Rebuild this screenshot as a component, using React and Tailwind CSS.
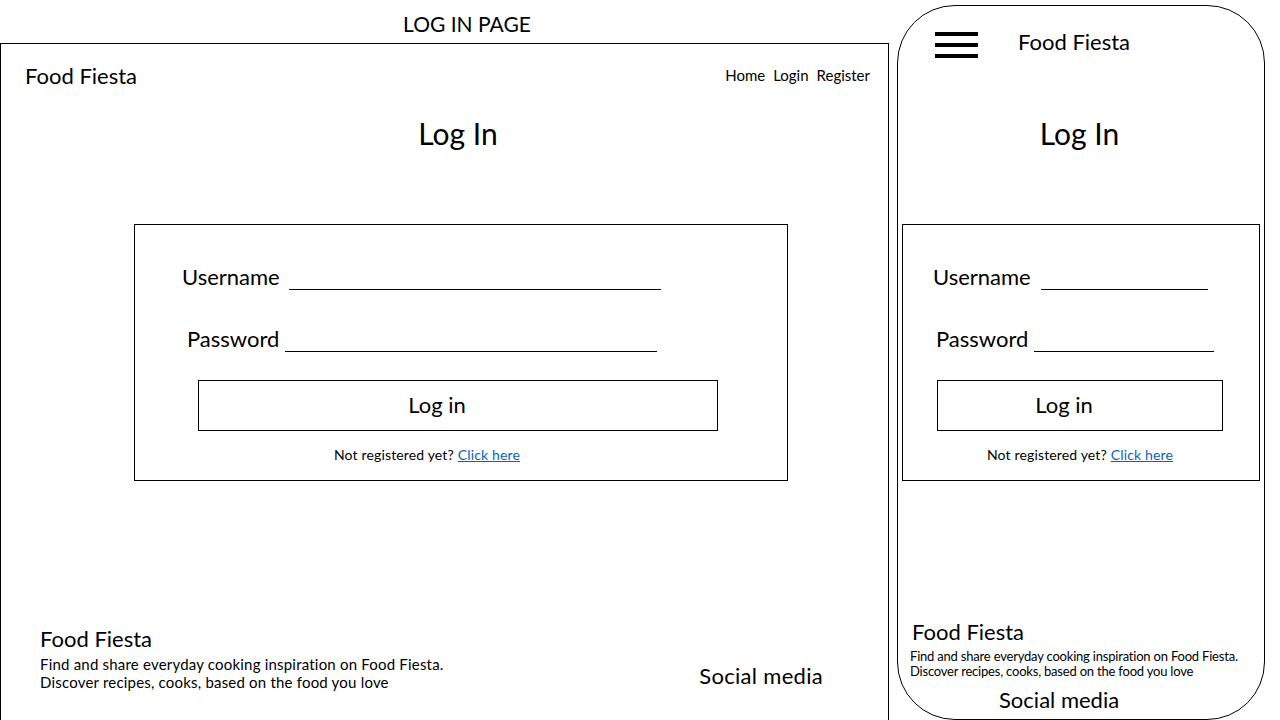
import React from 'react';

const font = { fontFamily: 'Lato, "Open Sans", sans-serif' };

const Field = ({ label, lineWidth, pl, gap }) => (
  <div className={`h-[30px] leading-[30px] text-[22px] whitespace-nowrap ${pl}`}>
    {label}
    <span className={`inline-block ${gap} ${lineWidth} border-b border-black -mb-[5px]`}></span>
  </div>
);

const LoginForm = ({ wrap, rows, button, notePl }) => (
  <div className={`border border-black h-[257px] pt-[37px] ${wrap}`}>
    <Field {...rows[0]} />
    <div className="h-[32px]"></div>
    <Field {...rows[1]} />
    <button className={`mt-[26px] h-[51px] border border-black text-[22px] flex items-center justify-center pb-[2px] ${button}`}>
      Log in
    </button>
    <p className={`mt-[14px] text-[14px] leading-[20px] tracking-[0.15px] whitespace-nowrap ${notePl}`}>
      Not registered yet? <a href="#" className="text-[#0563c1] underline">Click here</a>
    </p>
  </div>
);

const Desktop = () => (
  <div className="w-[889px] shrink-0">
    <div className="h-[43px] flex items-center justify-center pt-[5px] pl-[45px] text-[21px]">LOG IN PAGE</div>
    <div className="border border-black h-[700px] flex flex-col">
      <header className="h-[63px] flex items-center pl-[24px] pr-[18px]">
        <span className="text-[22px]">Food Fiesta</span>
        <nav className="ml-auto flex gap-[8px] text-[15px]">
          <a href="#">Home</a>
          <a href="#">Login</a>
          <a href="#">Register</a>
        </nav>
      </header>
      <h1 className="h-[54px] flex items-center justify-center pl-[27px] pb-[2px] text-[30px]">Log In</h1>
      <LoginForm
        wrap="mt-[63px] ml-[133px] w-[654px]"
        rows={[
          { label: 'Username', lineWidth: 'w-[372px]', pl: 'pl-[47px]', gap: 'ml-[9px]' },
          { label: 'Password', lineWidth: 'w-[372px]', pl: 'pl-[52px]', gap: 'ml-[6px]' },
        ]}
        button="ml-[63px] w-[520px] pr-[42px]"
        notePl="pl-[199px]"
      />
      <footer className="mt-[144px] flex pl-[39px]">
        <div>
          <div className="text-[22px] leading-[28px]">Food Fiesta</div>
          <p className="mt-[2px] text-[15px] leading-[18px] tracking-[0.2px]">
            Find and share everyday cooking inspiration on Food Fiesta.<br />
            Discover recipes, cooks, based on the food you love
          </p>
        </div>
        <div className="ml-auto mr-[65px] mt-[37px] text-[22px] leading-[28px] tracking-[0.3px]">Social media</div>
      </footer>
    </div>
  </div>
);

const Mobile = () => (
  <div className="mt-[5px] w-[368px] h-[715px] shrink-0 border border-black rounded-[58px] overflow-hidden flex flex-col">
    <header className="h-[70px] flex items-center">
      <div className="ml-[37px] mt-[8px] flex flex-col gap-[7px]">
        <span className="block w-[43px] h-[4px] bg-black"></span>
        <span className="block w-[43px] h-[4px] bg-black"></span>
        <span className="block w-[43px] h-[4px] bg-black"></span>
      </div>
      <span className="ml-[40px] text-[22px]">Food Fiesta</span>
    </header>
    <h1 className="mt-[31px] h-[54px] flex items-center justify-center pr-[3px] pb-[2px] text-[30px]">Log In</h1>
    <LoginForm
      wrap="mt-[63px] mx-[4px]"
      rows={[
        { label: 'Username', lineWidth: 'w-[167px]', pl: 'pl-[30px]', gap: 'ml-[10px]' },
        { label: 'Password', lineWidth: 'w-[180px]', pl: 'pl-[33px]', gap: 'ml-[6px]' },
      ]}
      button="ml-[34px] w-[286px] pr-[32px]"
      notePl="pl-[84px]"
    />
    <footer className="mt-[137px]">
      <div className="pl-[14px] text-[22px] leading-[28px]">Food Fiesta</div>
      <p className="mt-[3px] pl-[12px] text-[13px] leading-[15px] tracking-[-0.2px]">
        Find and share everyday cooking inspiration on Food Fiesta.<br />
        Discover recipes, cooks, based on the food you love
      </p>
      <div className="mt-[7px] pl-[101px] text-[22px] leading-[28px]">Social media</div>
    </footer>
  </div>
);

export default function App() {
  return (
    <div className="w-[1280px] h-[720px] overflow-hidden bg-white text-black flex gap-[8px]" style={font}>
      <Desktop />
      <Mobile />
    </div>
  );
}
